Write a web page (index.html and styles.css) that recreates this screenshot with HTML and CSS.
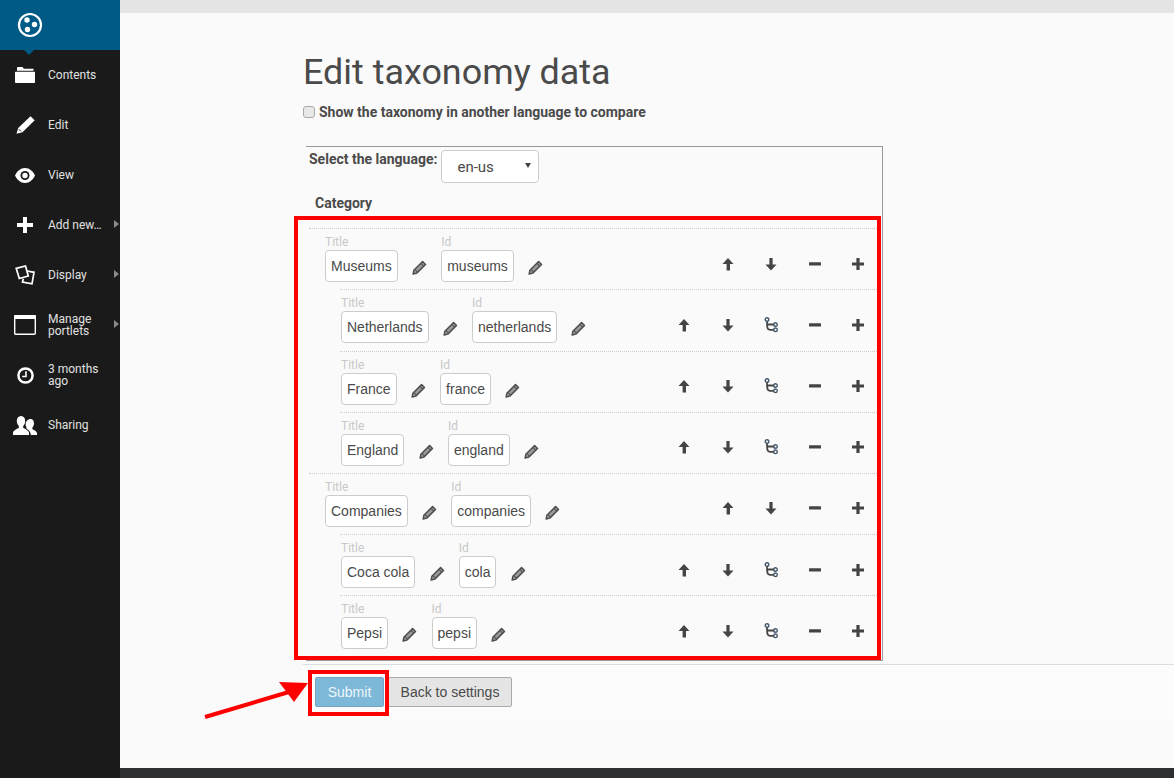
FILE: index.html
```html
<!DOCTYPE html>
<html lang="en">
<head>
    <meta charset="UTF-8">
    <meta name="viewport" content="width=device-width, initial-scale=1.0">
    <title>Edit taxonomy data</title>
    <link rel="stylesheet" href="styles.css">
</head>
<body>
    <svg class="sprite" xmlns="http://www.w3.org/2000/svg">
        <symbol id="i-pencil" viewBox="0 0 16 16">
            <path d="M11.3 1.600l3.100 3.100-9.300 9.300-3.900 1 .8-4z" fill="#9a9a9a" stroke="#4d4d4d" stroke-width="1.600" stroke-linejoin="round"/>
            <path d="M3.600 10.600l2.200 2.200M9.800 3.800l2.400 2.400" stroke="#4d4d4d" stroke-width="1.100"/>
        </symbol>
        <symbol id="i-up" viewBox="0 0 12 14">
            <path d="M6 1l5.500 6H8v6.500H4.600V7H.5z" fill="#444"/>
        </symbol>
        <symbol id="i-down" viewBox="0 0 12 14">
            <path d="M6 13.500L.5 7.500h3.900V1h3.200v6.500h3.900z" fill="#444"/>
        </symbol>
        <symbol id="i-tree" viewBox="0 0 14 16">
            <path d="M3 3c0 3 0 6 .5 8 .3 1.200 1 1.800 2.500 1.800h5M3.300 7.500h7.700" fill="none" stroke="#444" stroke-width="1.800"/>
            <circle cx="3" cy="2.500" r="1.800" fill="#fafafa" stroke="#45586a" stroke-width="1.400"/>
            <circle cx="11.500" cy="7.500" r="1.800" fill="#fafafa" stroke="#45586a" stroke-width="1.400"/>
            <circle cx="11.500" cy="12.800" r="1.800" fill="#fafafa" stroke="#45586a" stroke-width="1.400"/>
        </symbol>
        <symbol id="i-minus" viewBox="0 0 12 12">
            <rect y="4.200" width="12" height="3.400" rx=".5" fill="#444"/>
        </symbol>
        <symbol id="i-plus" viewBox="0 0 12 12">
            <path d="M4.400 0h3.200v4.400H12v3.200H7.600V12H4.400V7.600H0V4.400h4.400z" fill="#444"/>
        </symbol>
    </svg>

    <div class="page">
        <nav class="toolbar">
            <div class="logo">
                <svg width="26" height="26" viewBox="0 0 26 26">
                    <circle cx="13" cy="13" r="11" fill="none" stroke="#fff" stroke-width="2.200"/>
                    <circle cx="10" cy="8" r="2.700" fill="#fff"/>
                    <circle cx="17.500" cy="12.500" r="2.700" fill="#fff"/>
                    <circle cx="10.500" cy="17.500" r="2.700" fill="#fff"/>
                </svg>
            </div>
            <a class="tool">
                <span class="tool-icon">
                    <svg width="20" height="16" viewBox="0 0 20 16"><path d="M2 3.800V1c0-.5.300-1 1-1h4.500l1.300 1.700H18.500V3.800H2z" fill="#fff"/><path d="M1 4.800h18c.6 0 1 .4 1 1V15c0 .6-.4 1-1 1H1c-.6 0-1-.4-1-1V5.800c0-.6.400-1 1-1z" fill="#fff"/></svg>
                </span>
                <span class="tool-label">Contents</span>
            </a>
            <a class="tool">
                <span class="tool-icon">
                    <svg width="19" height="18" viewBox="0 0 19 18"><path d="M14.500.300l4.200 4L6.500 16.200.5 17.700 2.200 12z" fill="#fff"/><path d="M2.800 13.200l2.200 2.200" stroke="#1a1a1a" stroke-width="1"/></svg>
                </span>
                <span class="tool-label">Edit</span>
            </a>
            <a class="tool">
                <span class="tool-icon">
                    <svg width="20" height="15" viewBox="0 0 20 15"><path d="M10 0c4.500 0 8 3.400 10 7.500-2 4.100-5.500 7.500-10 7.500S2 11.600 0 7.500C2 3.400 5.500 0 10 0z" fill="#fff"/><circle cx="10" cy="7.500" r="4.500" fill="#1a1a1a"/><circle cx="10" cy="7.500" r="2.700" fill="#fff"/></svg>
                </span>
                <span class="tool-label">View</span>
            </a>
            <a class="tool">
                <span class="tool-icon">
                    <svg width="16" height="16" viewBox="0 0 16 16"><path d="M6 0h4v6h6v4h-6v6H6v-6H0V6h6z" fill="#fff"/></svg>
                </span>
                <span class="tool-label">Add new…</span>
                <span class="tool-more"></span>
            </a>
            <a class="tool">
                <span class="tool-icon">
                    <svg width="20" height="20" viewBox="0 0 20 20"><path d="M1.200 3.300L10.500 1l2.800 10-9 2.500z" fill="none" stroke="#fff" stroke-width="1.700"/><path d="M12 6l7 1.300-2 11.500-9.500-1.800.8-3.300" fill="none" stroke="#fff" stroke-width="1.700"/></svg>
                </span>
                <span class="tool-label">Display</span>
                <span class="tool-more"></span>
            </a>
            <a class="tool">
                <span class="tool-icon">
                    <svg width="22" height="20" viewBox="0 0 22 20"><rect x=".7" y=".7" width="20.600" height="18.600" rx="1" fill="none" stroke="#fff" stroke-width="1.400"/><rect x="0" y="0" width="22" height="4" rx="1" fill="#fff"/></svg>
                </span>
                <span class="tool-label">Manage portlets</span>
                <span class="tool-more"></span>
            </a>
            <a class="tool">
                <span class="tool-icon">
                    <svg width="17" height="17" viewBox="0 0 18 18"><circle cx="9" cy="9" r="7.500" fill="none" stroke="#fff" stroke-width="2.600"/><path d="M9.500 4.500V10H5.500" fill="none" stroke="#fff" stroke-width="1.700"/></svg>
                </span>
                <span class="tool-label">3 months ago</span>
            </a>
            <a class="tool">
                <span class="tool-icon">
                    <svg width="24" height="19" viewBox="0 0 24 19"><path d="M8 0c2.800 0 4.200 2.300 4.200 5 0 2.200-1 4-2 5v2c2.500 1 5.300 2.500 5.800 4.500V19H0v-2.500C.5 14.500 3.300 13 5.800 12v-2c-1-1-2-2.800-2-5 0-2.700 1.400-5 4.200-5z" fill="#fff"/><path d="M17.500 3c2.300 0 3.500 2 3.500 4.300 0 1.800-.8 3.300-1.600 4.200v1.700c2 .8 4.100 2 4.600 3.800v2h-6.200c0-2.800-1.800-4.900-4.300-6.200v-1.300c-.6-1-.9-2-.9-3.200 0-2.800 2.300-5.300 4.900-5.300z" fill="#fff"/></svg>
                </span>
                <span class="tool-label">Sharing</span>
            </a>
        </nav>

        <div class="main">
            <div class="topbar"></div>
            <div class="content">
                <h1>Edit taxonomy data</h1>
                <label class="compare">
                    <input type="checkbox">
                    Show the taxonomy in another language to compare
                </label>

                <div class="frame">
                    <div class="lang-row">
                        <label class="lang-label">Select the language:</label>
                        <span class="select-wrap">
                            <select class="lang-select"><option>en-us</option></select>
                        </span>
                    </div>
                    <div class="category">Category</div>

                    <div class="term-row">
                        <div class="field"><span class="field-label">Title</span><span class="field-box">Museums</span></div>
                        <span class="pencil"><svg><use href="#i-pencil"/></svg></span>
                        <div class="field"><span class="field-label">Id</span><span class="field-box">museums</span></div>
                        <span class="pencil"><svg><use href="#i-pencil"/></svg></span>
                        <div class="actions">
                            <span class="act"><svg class="arrow"><use href="#i-up"/></svg></span>
                            <span class="act"><svg class="arrow"><use href="#i-down"/></svg></span>
                            <span class="act"><svg class="sign"><use href="#i-minus"/></svg></span>
                            <span class="act"><svg class="sign"><use href="#i-plus"/></svg></span>
                        </div>
                    </div>
                    <div class="term-row sub">
                        <div class="field"><span class="field-label">Title</span><span class="field-box">Netherlands</span></div>
                        <span class="pencil"><svg><use href="#i-pencil"/></svg></span>
                        <div class="field"><span class="field-label">Id</span><span class="field-box">netherlands</span></div>
                        <span class="pencil"><svg><use href="#i-pencil"/></svg></span>
                        <div class="actions">
                            <span class="act"><svg class="arrow"><use href="#i-up"/></svg></span>
                            <span class="act"><svg class="arrow"><use href="#i-down"/></svg></span>
                            <span class="act"><svg class="tree"><use href="#i-tree"/></svg></span>
                            <span class="act"><svg class="sign"><use href="#i-minus"/></svg></span>
                            <span class="act"><svg class="sign"><use href="#i-plus"/></svg></span>
                        </div>
                    </div>
                    <div class="term-row sub">
                        <div class="field"><span class="field-label">Title</span><span class="field-box">France</span></div>
                        <span class="pencil"><svg><use href="#i-pencil"/></svg></span>
                        <div class="field"><span class="field-label">Id</span><span class="field-box">france</span></div>
                        <span class="pencil"><svg><use href="#i-pencil"/></svg></span>
                        <div class="actions">
                            <span class="act"><svg class="arrow"><use href="#i-up"/></svg></span>
                            <span class="act"><svg class="arrow"><use href="#i-down"/></svg></span>
                            <span class="act"><svg class="tree"><use href="#i-tree"/></svg></span>
                            <span class="act"><svg class="sign"><use href="#i-minus"/></svg></span>
                            <span class="act"><svg class="sign"><use href="#i-plus"/></svg></span>
                        </div>
                    </div>
                    <div class="term-row sub">
                        <div class="field"><span class="field-label">Title</span><span class="field-box">England</span></div>
                        <span class="pencil"><svg><use href="#i-pencil"/></svg></span>
                        <div class="field"><span class="field-label">Id</span><span class="field-box">england</span></div>
                        <span class="pencil"><svg><use href="#i-pencil"/></svg></span>
                        <div class="actions">
                            <span class="act"><svg class="arrow"><use href="#i-up"/></svg></span>
                            <span class="act"><svg class="arrow"><use href="#i-down"/></svg></span>
                            <span class="act"><svg class="tree"><use href="#i-tree"/></svg></span>
                            <span class="act"><svg class="sign"><use href="#i-minus"/></svg></span>
                            <span class="act"><svg class="sign"><use href="#i-plus"/></svg></span>
                        </div>
                    </div>
                    <div class="term-row">
                        <div class="field"><span class="field-label">Title</span><span class="field-box">Companies</span></div>
                        <span class="pencil"><svg><use href="#i-pencil"/></svg></span>
                        <div class="field"><span class="field-label">Id</span><span class="field-box">companies</span></div>
                        <span class="pencil"><svg><use href="#i-pencil"/></svg></span>
                        <div class="actions">
                            <span class="act"><svg class="arrow"><use href="#i-up"/></svg></span>
                            <span class="act"><svg class="arrow"><use href="#i-down"/></svg></span>
                            <span class="act"><svg class="sign"><use href="#i-minus"/></svg></span>
                            <span class="act"><svg class="sign"><use href="#i-plus"/></svg></span>
                        </div>
                    </div>
                    <div class="term-row sub">
                        <div class="field"><span class="field-label">Title</span><span class="field-box">Coca cola</span></div>
                        <span class="pencil"><svg><use href="#i-pencil"/></svg></span>
                        <div class="field"><span class="field-label">Id</span><span class="field-box">cola</span></div>
                        <span class="pencil"><svg><use href="#i-pencil"/></svg></span>
                        <div class="actions">
                            <span class="act"><svg class="arrow"><use href="#i-up"/></svg></span>
                            <span class="act"><svg class="arrow"><use href="#i-down"/></svg></span>
                            <span class="act"><svg class="tree"><use href="#i-tree"/></svg></span>
                            <span class="act"><svg class="sign"><use href="#i-minus"/></svg></span>
                            <span class="act"><svg class="sign"><use href="#i-plus"/></svg></span>
                        </div>
                    </div>
                    <div class="term-row sub">
                        <div class="field"><span class="field-label">Title</span><span class="field-box">Pepsi</span></div>
                        <span class="pencil"><svg><use href="#i-pencil"/></svg></span>
                        <div class="field"><span class="field-label">Id</span><span class="field-box">pepsi</span></div>
                        <span class="pencil"><svg><use href="#i-pencil"/></svg></span>
                        <div class="actions">
                            <span class="act"><svg class="arrow"><use href="#i-up"/></svg></span>
                            <span class="act"><svg class="arrow"><use href="#i-down"/></svg></span>
                            <span class="act"><svg class="tree"><use href="#i-tree"/></svg></span>
                            <span class="act"><svg class="sign"><use href="#i-minus"/></svg></span>
                            <span class="act"><svg class="sign"><use href="#i-plus"/></svg></span>
                        </div>
                    </div>
                </div>

                <div class="form-actions">
                    <button class="btn btn-primary">Submit</button>
                    <button class="btn btn-back">Back to settings</button>
                </div>
            </div>
            <div class="footer"></div>
        </div>

        <!-- red annotations on top of the screenshot -->
        <div class="mark mark-tree"></div>
        <div class="mark mark-submit"></div>
        <svg class="mark-arrow" width="110" height="42" viewBox="0 0 110 42">
            <path d="M1 37L95 9" stroke="#f00" stroke-width="4"/>
            <path d="M75 2L104 3 90 22z" fill="#f00"/>
        </svg>
    </div>
</body>
</html>
```

FILE: styles.css
```css
* {
    box-sizing: border-box;
}

body {
    margin: 0;
    font-family: Roboto, sans-serif;
    font-size: 14px;
    color: #4a4a4a;
    background-color: #fafafa;
}

.sprite {
    display: none;
}

.page {
    position: relative;
    display: flex;
    height: 778px;
    overflow: hidden;
}

/* left toolbar */
.toolbar {
    flex: none;
    width: 120px;
    background-color: #1a1a1a;
}

.logo {
    position: relative;
    display: flex;
    align-items: center;
    height: 50px;
    padding-left: 17px;
    background-color: #005a86;
}

.logo::after {
    content: "";
    position: absolute;
    left: 24px;
    top: 50px;
    border: 5px solid transparent;
    border-bottom-width: 0;
    border-top-color: #005a86;
}

.tool {
    position: relative;
    display: flex;
    align-items: center;
    height: 50px;
    color: #e0e0e0;
    font-size: 12px;
    line-height: 12px;
}

.tool-icon {
    flex: none;
    display: flex;
    justify-content: center;
    width: 50px;
    margin-right: -2px;
}

.tool-label {
    width: 62px;
}

.tool-more {
    position: absolute;
    right: 1px;
    top: 20px;
    border: 4px solid transparent;
    border-right-width: 0;
    border-left: 5px solid #8a8a8a;
}

/* main column */
.main {
    flex: 1;
    display: flex;
    flex-direction: column;
    min-width: 0;
}

.topbar {
    flex: none;
    height: 13px;
    background-color: #e5e4e4;
}

.content {
    flex: 1;
    padding-left: 183px;
}

.footer {
    flex: none;
    height: 10px;
    background-color: #2e3133;
}

h1 {
    margin: 35px 0 0;
    font-size: 35.9px;
    font-weight: 400;
    line-height: 48px;
}

.compare {
    display: flex;
    align-items: center;
    gap: 4px;
    margin-top: 6px;
    height: 20px;
    font-weight: 700;
}

.compare input {
    appearance: none;
    width: 12px;
    height: 12px;
    margin: 0;
    border: 1px solid #aaa;
    border-radius: 3px;
    background-color: #e8e8e8;
}

.frame {
    width: 577px;
    height: 515px;
    margin: 24px 0 0 3px;
    border-top: 1px solid #999;
    border-right: 1px solid #999;
    border-bottom: 1px solid #999;
}

.lang-row {
    display: flex;
    gap: 4px;
    padding: 3px 0 0 3px;
    height: 37px;
}

.lang-label {
    font-weight: 700;
    line-height: 19px;
}

.select-wrap {
    position: relative;
    display: block;
}

.select-wrap::after {
    content: "";
    position: absolute;
    right: 8px;
    top: 13px;
    border: 3px solid transparent;
    border-bottom-width: 0;
    border-top: 5px solid #444;
}

.lang-select {
    appearance: none;
    width: 98px;
    height: 33px;
    padding: 0 15px;
    border: 1px solid #ccc;
    border-radius: 4px;
    background-color: #fff;
    font-family: Roboto, sans-serif;
    font-size: 15px;
    color: #4a4a4a;
}

.category {
    padding: 11px 0 0 9px;
    height: 44.2px;
    font-weight: 700;
    line-height: 17px;
}

/* taxonomy rows */
.term-row {
    display: flex;
    height: 61.17px;
    margin: 0 5px 0 3px;
    padding: 7px 0 0 16px;
    border-top: 1px dotted #ccc;
}

.term-row.sub {
    margin-left: 34px;
    padding-left: 1px;
}

.field {
    display: flex;
    flex-direction: column;
    align-items: flex-start;
}

.field-label {
    height: 14px;
    font-size: 12px;
    line-height: 12px;
    color: #c8c8c8;
}

.field-box {
    height: 32px;
    padding: 0 5px;
    border: 1px solid #ccc;
    border-radius: 4px;
    background-color: #fff;
    font-family: "Liberation Sans", Arial, sans-serif;
    font-size: 14px;
    line-height: 30px;
    white-space: nowrap;
}

.pencil {
    flex: none;
    display: flex;
    justify-content: center;
    width: 43.5px;
    padding-top: 24px;
}

.pencil svg {
    width: 15px;
    height: 15px;
}

.actions {
    display: flex;
    margin-left: auto;
    margin-right: -3px;
    padding-top: 19.6px;
}

.act {
    display: flex;
    justify-content: center;
    width: 43.5px;
    height: 16px;
    align-items: center;
}

.arrow {
    width: 12px;
    height: 14px;
}

.tree {
    width: 14px;
    height: 16px;
}

.sign {
    width: 12px;
    height: 12px;
}

/* buttons */
.form-actions {
    display: flex;
    gap: 4px;
    height: 55px;
    margin-top: 3px;
    padding: 12px 0 0 12px;
    border-top: 1px solid #ddd;
    background-color: #fcfcfc;
}

.btn {
    height: 30px;
    padding: 0;
    border: 1px solid #aaa;
    border-radius: 2px;
    background-color: #e5e5e5;
    font-family: "Liberation Sans", Arial, sans-serif;
    font-size: 14px;
    color: #4a4a4a;
}

.btn-back {
    width: 124px;
}

.btn-primary {
    width: 69px;
    border-color: #75a5c0;
    background-color: #7db8d8;
    color: #eef6fa;
}

/* annotations */
.mark {
    position: absolute;
    border: 4px solid #f00;
}

.mark-tree {
    left: 294px;
    top: 216px;
    width: 587px;
    height: 444px;
}

.mark-submit {
    left: 308px;
    top: 670px;
    width: 81px;
    height: 46px;
}

.mark-arrow {
    position: absolute;
    left: 204px;
    top: 680px;
}
```
